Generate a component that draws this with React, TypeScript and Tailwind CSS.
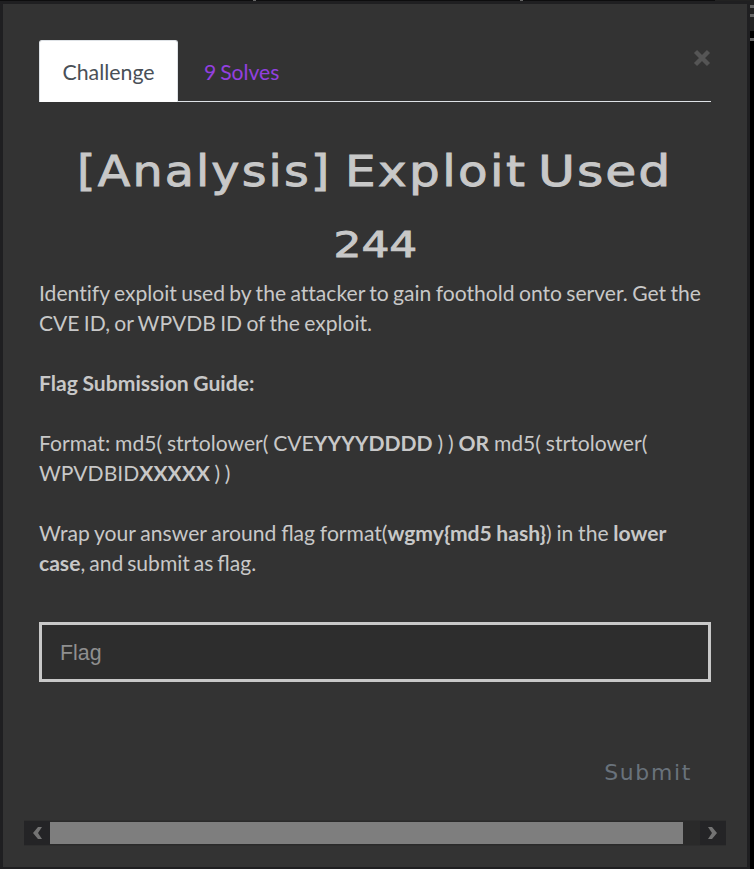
export default function App() {
  return (
    <div className="flex h-[869px] w-[754px] flex-col overflow-hidden bg-black font-['Lato',sans-serif] text-[21.33px] leading-[30px] text-[#c8c8c8]">
      <div className="flex h-px bg-[#0d0d0e]">
        <div className="ml-[253px] h-px w-[3px] bg-[#666]" />
        <div className="ml-[264px] h-px w-[3px] bg-[#666]" />
        <div className="ml-[192px] h-px flex-1 bg-[#222]" />
      </div>
      <div className="flex h-[868px]">
        <main className="flex w-[750px] flex-col border-[3px] border-b-2 border-[#1f1f21] bg-[#333333] pl-9 pr-9 pt-9">
          <header className="relative flex h-[62px] items-end">
            <div className="flex h-[62px] w-[139px] items-center justify-center rounded-t-[3px] border border-b-0 border-[#dee2e6] bg-white text-[#495057]">
              Challenge
            </div>
            <div className="flex h-[62px] flex-1 items-center border-b border-[#dee2e6] pl-[26px] pt-[2px] text-[21.1px] text-[#9340e0] [word-spacing:-1.5px]">
              9 Solves
            </div>
            <button aria-label="Close" className="absolute right-0 top-[9px]">
              <svg width="18" height="18" viewBox="0 0 18 18" fill="none" stroke="#555555" strokeWidth="4.4">
                <path d="M2.5 2.5 15.5 15.5M15.5 2.5 2.5 15.5" />
              </svg>
            </button>
          </header>

          <h2 className="mt-[40px] flex h-[60px] items-center whitespace-nowrap font-['DejaVu_Sans',sans-serif] text-[42.5px] leading-[60px] [-webkit-text-stroke:0.9px_#c8c8c8]">
            <span className="ml-[38px] w-[268px] origin-left scale-x-[1.12] tracking-[1.9px]">[Analysis]</span>
            <span className="w-[193px] origin-left scale-x-[1.14] tracking-[2.1px]">Exploit</span>
            <span className="origin-left scale-x-[1.19] tracking-[1.6px]">Used</span>
          </h2>
          <h3 className="mt-[18px] flex h-[50px] items-center justify-center font-['DejaVu_Sans',sans-serif] text-[36px] leading-[50px] [-webkit-text-stroke:0.9px_#c8c8c8]">
            <span className="scale-x-[1.22]">244</span>
          </h3>

          <section className="mt-[8px] whitespace-nowrap text-[21.1px]">
            <p className="[font-variant-ligatures:none]">
              <span className="[word-spacing:-1.05px]">
                Identify exploit used by the attacker to gain foothold onto server. Get the
              </span>
              <br />
              <span className="[word-spacing:-1.1px]">CVE ID, or WPVDB ID of the exploit.</span>
            </p>
            <p className="mt-[30px] font-bold [word-spacing:-0.5px]">Flag Submission Guide:</p>
            <p className="mt-[30px] [word-spacing:-0.55px]">
              Format: md5( strtolower( CVE<b>YYYYDDDD</b> ) ) <b>OR</b> md5( strtolower(
              <br />
              <span className="[word-spacing:-0.85px]">
                WPVDBID<b>XXXXX</b> ) )
              </span>
            </p>
            <p className="mt-[30px] [word-spacing:-0.6px]">
              Wrap your answer around flag format(<b>wgmy{'{'}md5 hash{'}'}</b>) in the <b>lower</b>
              <br />
              <span className="[word-spacing:-1.45px]">
                <b>case</b>, and submit as flag.
              </span>
            </p>
          </section>

          <input
            placeholder="Flag"
            className="mt-[44px] h-[60px] w-full shrink-0 border-[3px] border-[#c8c8c8] bg-[#2d2d2d] px-[18px] pt-[2px] font-['Liberation_Sans',sans-serif] text-[21.33px] outline-none placeholder:text-[#8f8f8f]"
          />
          <button className="mr-[19px] mt-[76px] h-[30px] origin-right scale-x-[1.02] self-end whitespace-nowrap font-['DejaVu_Sans',sans-serif] text-[21.5px] tracking-[1.6px] text-[#69727b]">
            Submit
          </button>

          <div className="-ml-[15px] mt-[32px] flex h-[26px] w-[702px] shrink-0 items-center border-y border-[#2e2e2e] bg-[#2a2a2a]">
            <div className="flex h-6 w-[26px] items-center justify-center bg-[#242426]">
              <svg width="10" height="12" viewBox="0 0 10 12" fill="#737373" className="translate-x-px">
                <path d="M5 0h4L5 6l4 6H5L0 6Z" />
              </svg>
            </div>
            <div className="h-[22px] w-[633px] bg-[#7e7e7e]" />
            <div className="ml-auto flex h-6 w-[26px] items-center justify-center bg-[#242426]">
              <svg width="10" height="12" viewBox="0 0 10 12" fill="#737373" className="-translate-x-px">
                <path d="M5 0H1l4 6-4 6h4l5-6Z" />
              </svg>
            </div>
          </div>
        </main>
        <aside className="flex w-1 flex-col">
          <div className="h-[30px] bg-[#222222] pt-1">
            <div className="h-[3px] bg-[#666]" />
            <div className="mt-[6px] h-[3px] bg-[#666]" />
          </div>
          <div className="mt-[7px] h-[3px] bg-[#666]" />
        </aside>
      </div>
    </div>
  );
}
